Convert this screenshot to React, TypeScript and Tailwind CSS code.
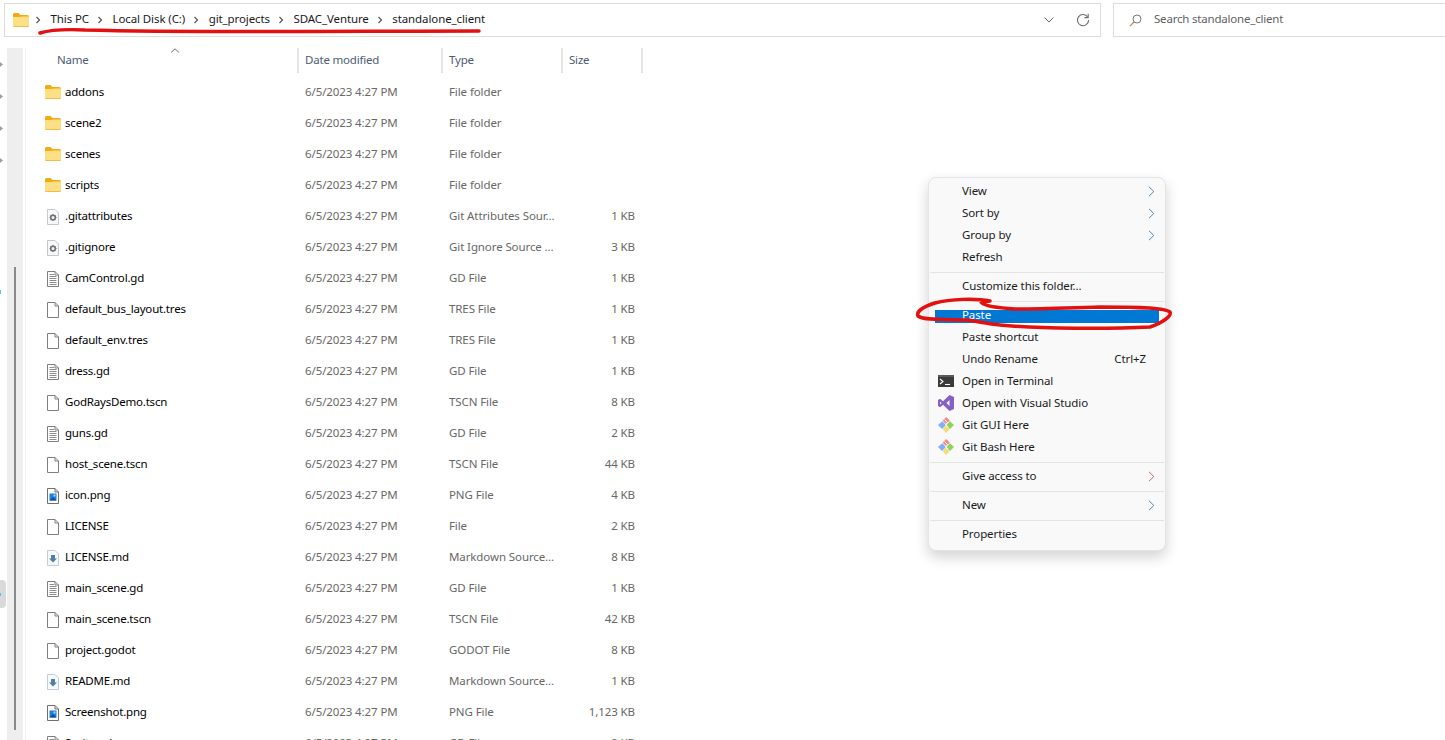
import React from "react";

type Kind = "folder" | "gear" | "text" | "blank" | "png" | "md";
const DATE = "6/5/2023 4:27 PM";
const files: [string, Kind, string, string][] = [
  ["addons", "folder", "File folder", ""],
  ["scene2", "folder", "File folder", ""],
  ["scenes", "folder", "File folder", ""],
  ["scripts", "folder", "File folder", ""],
  [".gitattributes", "gear", "Git Attributes Sour...", "1 KB"],
  [".gitignore", "gear", "Git Ignore Source ...", "3 KB"],
  ["CamControl.gd", "text", "GD File", "1 KB"],
  ["default_bus_layout.tres", "blank", "TRES File", "1 KB"],
  ["default_env.tres", "blank", "TRES File", "1 KB"],
  ["dress.gd", "text", "GD File", "1 KB"],
  ["GodRaysDemo.tscn", "blank", "TSCN File", "8 KB"],
  ["guns.gd", "text", "GD File", "2 KB"],
  ["host_scene.tscn", "blank", "TSCN File", "44 KB"],
  ["icon.png", "png", "PNG File", "4 KB"],
  ["LICENSE", "blank", "File", "2 KB"],
  ["LICENSE.md", "md", "Markdown Source...", "8 KB"],
  ["main_scene.gd", "text", "GD File", "1 KB"],
  ["main_scene.tscn", "blank", "TSCN File", "42 KB"],
  ["project.godot", "blank", "GODOT File", "8 KB"],
  ["README.md", "md", "Markdown Source...", "1 KB"],
  ["Screenshot.png", "png", "PNG File", "1,123 KB"],
  ["Sprite.gd", "text", "GD File", "2 KB"],
];

function Folder() {
  return (
    <svg width="16" height="14" viewBox="0 0 16 14" className="shrink-0">
      <path d="M0 1.5Q0 0 1.5 0H5.5L7.5 2H14.5Q16 2 16 3.5V5H0Z" fill="#f2ab12" />
      <path d="M0 4H16V12.5Q16 14 14.5 14H1.5Q0 14 0 12.5Z" fill="#fddf86" />
      <path d="M0 4.3H6.5L8 3.3H16V4.3H0Z" fill="#f8cf5c" />
      <path d="M0 13H16V12.5Q16 14 14.5 14H1.5Q0 14 0 12.5Z" fill="#f0bd4a" />
    </svg>
  );
}

function Page({ children }: { children?: React.ReactNode }) {
  return (
    <svg width="12" height="16" viewBox="0 0 12 16" className="shrink-0">
      <path d="M.5.5H8L11.5 4V15.5H.5Z" fill="#fff" stroke="#7e7e7e" />
      <path d="M8 .5V4H11.5" fill="none" stroke="#7e7e7e" />
      {children}
    </svg>
  );
}

function FileIcon({ kind }: { kind: Kind }) {
  if (kind === "folder") return <Folder />;
  if (kind === "blank") return <Page />;
  if (kind === "text")
    return (
      <Page>
        <path d="M2.5 3.5H7M2.5 5.5H9.5M2.5 7.5H9.5M2.5 9.5H9.5M2.5 11.5H9.5M2.5 13.5H9.5" stroke="#8c8c8c" />
      </Page>
    );
  if (kind === "gear")
    return (
      <svg width="12" height="16" viewBox="0 0 12 16" className="shrink-0">
        <path d="M.5.5H8L11.5 4V15.5H.5Z" fill="#f7f7f7" stroke="#c4c8cc" />
        <circle cx="6" cy="8.5" r="2.3" fill="none" stroke="#6b7378" strokeWidth="1.6" />
        <path d="M6 5V6M6 11V12M2.5 8.5H3.5M8.5 8.5H9.5M3.6 6.1L4.3 6.8M7.7 10.2L8.4 10.9M8.4 6.1L7.7 6.8M4.3 10.2L3.6 10.9" stroke="#6b7378" strokeWidth="1.1" />
      </svg>
    );
  if (kind === "md")
    return (
      <svg width="12" height="16" viewBox="0 0 12 16" className="shrink-0">
        <path d="M.5.5H8L11.5 4V15.5H.5Z" fill="#f7f9fb" stroke="#c2ccd4" />
        <path d="M4 5H8V8.5H10L6 12.5L2 8.5H4Z" fill="#4f81a8" />
      </svg>
    );
  return (
    <svg width="12" height="16" viewBox="0 0 12 16" className="shrink-0">
      <path d="M.5.5H8L11.5 4V15.5H.5Z" fill="#fff" stroke="#6f6f6f" />
      <path d="M8 .5V4H11.5" fill="none" stroke="#6f6f6f" />
      <rect x="2.5" y="5.5" width="7" height="7" fill="#1e7fd8" />
      <path d="M2.5 12.5L6 9L9.5 12.5Z" fill="#0b4fa8" />
      <rect x="6.5" y="6.5" width="2" height="2" fill="#a9d8ff" />
    </svg>
  );
}

function Crumb({ label }: { label: string }) {
  return (
    <>
      <svg width="6" height="8" viewBox="0 0 6 8" className="shrink-0 ml-[8px] mr-[9.5px]">
        <path d="M1.5 1L4.5 4L1.5 7" fill="none" stroke="#555" strokeWidth="1.2" />
      </svg>
      <span className="text-[#1a1a1a] pb-[2px] tracking-[-0.1px]">{label}</span>
    </>
  );
}

function HeaderCell({ label, width, first }: { label: string; width: string; first?: boolean }) {
  return (
    <div className={`${width} h-[25px] flex items-center border-r-2 border-[#e5e5e5] text-[#4c5d73] pb-[2px] ${first ? "pl-[31px]" : "pl-[6px]"}`}>
      {label}
    </div>
  );
}

function Chevron({ color = "#4f86b5" }: { color?: string }) {
  return (
    <svg width="7" height="11" viewBox="0 0 7 11" className="ml-auto mr-[4px] shrink-0">
      <path d="M1 .8L5.8 5.5L1 10.2" fill="none" stroke={color} strokeWidth="1" />
    </svg>
  );
}

function GitIcon() {
  return (
    <svg width="16" height="16" viewBox="0 0 16 16">
      <path d="M8 8L4.2 4.2L0 8L4 12Z" fill="#7fb0fb" />
      <path d="M8.2 0L4.6 3.6L8.2 7.6L11.8 3.6Z" fill="#f98b8b" />
      <path d="M8.4 8L12 4.2L16 8L12 12Z" fill="#8fd35f" />
      <path d="M8 8.6L4.6 12.2L8 16L11.6 12.2Z" fill="#f4dc77" />
      <path d="M6.5 2.5L9.5 5.5L7.5 8L10 10" fill="none" stroke="#fff" strokeWidth="1" />
    </svg>
  );
}

function TerminalIcon() {
  return (
    <svg width="16" height="12" viewBox="0 0 16 12">
      <rect width="16" height="12" fill="#3a3a3a" />
      <rect width="16" height="2" fill="#5a5a5a" />
      <path d="M2 4L5 6.5L2 9" fill="none" stroke="#fff" strokeWidth="1.1" />
      <path d="M7 9.5H12" stroke="#fff" strokeWidth="1.1" />
    </svg>
  );
}

function VsIcon() {
  return (
    <svg width="16" height="16" viewBox="0 0 16 16">
      <path d="M11.5 0L16 2V14L11.5 16L5 9.8L2 12.2L0 11V5L2 3.8L5 6.2ZM11.5 5L8.4 8L11.5 11ZM2 6.6V9.4L3.6 8Z" fill="#8661c5" fillRule="evenodd" />
    </svg>
  );
}

function MenuItem({
  label,
  arrow,
  arrowColor,
  icon,
  hint,
  active,
}: {
  label: string;
  arrow?: boolean;
  arrowColor?: string;
  icon?: React.ReactNode;
  hint?: string;
  active?: boolean;
}) {
  return (
    <div className={`relative h-[22px] mx-[6px] flex items-center ${active ? "text-white" : "text-[#1a1a1a]"}`}>
      {active && <div className="absolute left-0 right-0 top-[6px] h-[13px] bg-[#0078d4]" />}
      <div className="w-[27px] pl-[3px] flex items-center justify-start">{icon}</div>
      <span className="relative">{label}</span>
      {hint && <span className="ml-auto mr-[13px]">{hint}</span>}
      {arrow && <Chevron color={arrowColor} />}
    </div>
  );
}

function Sep() {
  return <div className="mt-[4px] mb-[2px] h-px mx-[1px] bg-[#e3e3e3]" />;
}

export default function App() {
  return (
    <div className="relative w-[1445px] h-[740px] overflow-hidden bg-white text-[11.5px] leading-none tracking-[-0.2px] font-['Noto_Sans','Open_Sans',sans-serif]">
      <div className="flex items-start h-[48px] pt-[3px] pl-[4px]">
        <div className="w-[1097px] h-[34px] border border-[#dcdcdc] flex items-center pl-[8px]">
          <Folder />
          <div className="flex items-center ml-[-2px] flex-1">
            <Crumb label="This PC" />
            <Crumb label="Local Disk (C:)" />
            <Crumb label="git_projects" />
            <Crumb label="SDAC_Venture" />
            <Crumb label="standalone_client" />
          </div>
          <svg width="10" height="6" viewBox="0 0 10 6" className="mr-[22px]">
            <path d="M.5.5L5 5L9.5.5" fill="none" stroke="#666" />
          </svg>
          <svg width="14" height="14" viewBox="0 0 14 14" className="mr-[10px]">
            <path d="M11.8 4.2A5.6 5.6 0 1 0 12.6 7" fill="none" stroke="#707070" strokeWidth="1.1" />
            <path d="M12.2 .8V4.6H8.4" fill="none" stroke="#707070" strokeWidth="1.1" />
          </svg>
        </div>
        <div className="ml-[12px] flex-1 h-[34px] border border-[#dcdcdc] border-r-0 flex items-center pl-[15px] gap-[12px] text-[#5f5f5f]">
          <svg width="13" height="13" viewBox="0 0 13 13">
            <circle cx="8" cy="5" r="4" fill="none" stroke="#777" />
            <path d="M5 8L.8 12.2" stroke="#c9874a" strokeWidth="1.2" />
          </svg>
          <span className="pb-[2px]">Search standalone_client</span>
        </div>
      </div>

      <div className="flex">
        <div className="w-[26px] h-[692px] flex shrink-0 border-r border-[#f0f0f0]">
          <div className="w-[7px] flex flex-col items-start pt-[14px]">
            <div className="flex flex-col gap-[27px]">
              {[0, 1, 2, 3].map((i) => (
                <svg key={i} width="3" height="5" viewBox="0 0 3 5" className="block">
                  <path d="M0 0L3 2.5L0 5Z" fill="#9aa0a6" />
                </svg>
              ))}
            </div>
            <div className="mt-[127px] w-[1px] h-[4px] bg-[#4fc3f7]" />
            <div className="mt-[286px] w-[6px] h-[28px] bg-[#d9d9d9] rounded-r-sm flex items-center">
              <div className="w-[1px] h-[3px] bg-[#4fc3f7]" />
            </div>
          </div>
          <div className="w-[16px] bg-[#eeeeee] flex flex-col items-center pt-[219px]">
            <div className="w-[2px] h-[463px] bg-[#8a8a8a]" />
          </div>
        </div>
        <div className="flex-1">
          <div className="flex h-[25px] relative">
            <HeaderCell label="Name" width="w-[273px]" first />
            <HeaderCell label="Date modified" width="w-[144px]" />
            <HeaderCell label="Type" width="w-[120px]" />
            <HeaderCell label="Size" width="w-[80px]" />
            <svg width="10" height="5" viewBox="0 0 10 5" className="absolute left-[144px] top-0">
              <path d="M1 4.5L5 .8L9 4.5" fill="none" stroke="#777" />
            </svg>
          </div>
          <div className="pt-[4px]">
            {files.map(([name, kind, type, size]) => (
              <div key={name} className="flex items-center h-[31px]">
                <div className={`w-[39px] flex justify-end pr-[4px] ${kind === "folder" ? "pb-[2px]" : ""}`}>
                  <div className="w-[16px] flex justify-center">
                    <FileIcon kind={kind} />
                  </div>
                </div>
                <div className="w-[240px] pb-[2px] text-black">{name}</div>
                <div className="w-[144px] pb-[2px] tracking-[-0.1px] text-[#676767]">{DATE}</div>
                <div className="w-[120px] pb-[2px] tracking-[-0.1px] text-[#676767]">{type}</div>
                <div className="w-[66px] pb-[2px] tracking-[-0.1px] text-right text-[#676767]">{size}</div>
              </div>
            ))}
          </div>
        </div>
      </div>

      <div className="absolute left-[928px] top-[177px] w-[238px] h-[374px] bg-[#f9f9f9] border border-[#e4e4e4] rounded-[8px] pt-[2px] tracking-[-0.1px] shadow-[0_6px_14px_rgba(0,0,0,0.18)]">
        <MenuItem label="View" arrow />
        <MenuItem label="Sort by" arrow />
        <MenuItem label="Group by" arrow />
        <MenuItem label="Refresh" />
        <Sep />
        <MenuItem label="Customize this folder..." />
        <Sep />
        <MenuItem label="Paste" active />
        <MenuItem label="Paste shortcut" />
        <MenuItem label="Undo Rename" hint="Ctrl+Z" />
        <MenuItem label="Open in Terminal" icon={<TerminalIcon />} />
        <MenuItem label="Open with Visual Studio" icon={<VsIcon />} />
        <MenuItem label="Git GUI Here" icon={<GitIcon />} />
        <MenuItem label="Git Bash Here" icon={<GitIcon />} />
        <Sep />
        <MenuItem label="Give access to" arrow arrowColor="#b0705f" />
        <Sep />
        <MenuItem label="New" arrow />
        <Sep />
        <MenuItem label="Properties" />
      </div>

      <svg width="1445" height="740" viewBox="0 0 1445 740" className="absolute left-0 top-0 pointer-events-none">
        <path d="M40 33C50 30 65 29 85 30C200 33 350 31 479 31" fill="none" stroke="#e31010" strokeWidth="3.5" strokeLinecap="round" />
        <path
          d="M990 301C975 298 950 299 935 303C922 307 916 312 918 316C925 321 950 319 967 320C980 322 990 324 1000 325C1040 329 1110 329 1150 327C1162 323 1172 316 1170 312C1165 307 1130 307 1100 307C1060 308 1030 309 1015 309C1000 308 985 306 982 303C984 302 987 301 990 301"
          fill="none"
          stroke="#e31010"
          strokeWidth="3.5"
          strokeLinecap="round"
        />
      </svg>
    </div>
  );
}
